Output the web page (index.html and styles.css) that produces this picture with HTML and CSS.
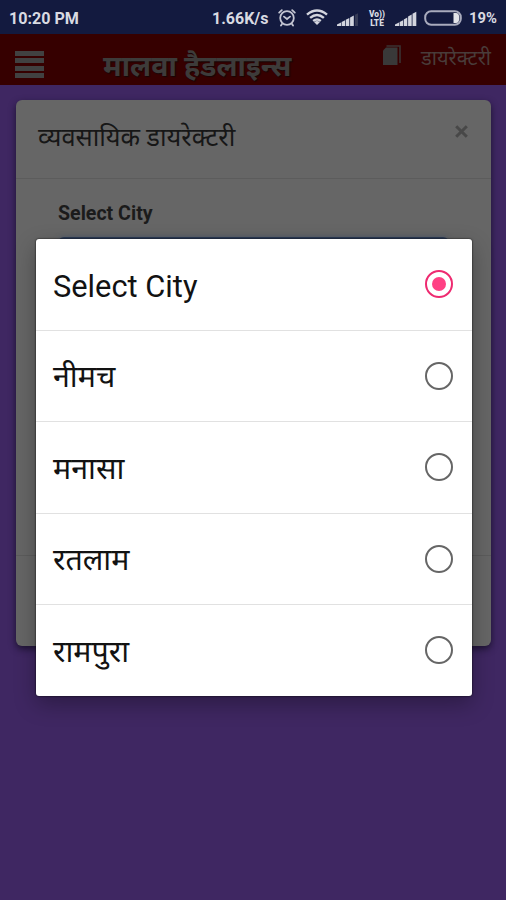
FILE: index.html
```html
<!DOCTYPE html>
<html lang="hi">
<head>
<meta charset="utf-8">
<title>मालवा हैडलाइन्स</title>
<link rel="stylesheet" href="styles.css">
</head>
<body>
<div class="status">
  <span class="clock">10:20 PM</span>
  <span class="speed">1.66K/s</span>
  <svg class="alarm" width="18" height="18" viewBox="0 0 18 18" fill="none" stroke="#c3c5d2" stroke-width="1.800" stroke-linecap="round"><circle cx="9" cy="9" r="6.8"/><path d="M6 7.6l3 2.4 3-2.4M1.2 3.6l2.6-2.4M16.8 3.6l-2.600-2.400M4 15l-1 1.600M14 15l1 1.600"/></svg>
  <svg class="wifi" width="22" height="16" viewBox="0 0 22 16" fill="none" stroke="#d3d5de" stroke-width="2.500"><path d="M1 5.600Q11-2.600 21 5.600M4.100 8.900Q11 3.200 17.900 8.900M7.200 12Q11 8.900 14.800 12"/><path d="M8.200 13.200Q11 11 13.800 13.200L11 16z" fill="#d3d5de" stroke="none"/></svg>
  <svg class="signal" width="22" height="15" viewBox="0 0 22 15" fill="#d3d5de"><path d="M0 15v-1.500l4-2V15zM4.600 15v-4l3.500-1.800V15zM8.800 15V8.800l3.500-1.800V15zM13.100 15V6.600l3.700-2V15z"/><path d="M18 15V3.800l3-1.500V15z" fill="#363b56"/></svg>
  <span class="volte"><span>Vo))</span><span>LTE</span></span>
  <svg class="signal second" width="22" height="15" viewBox="0 0 22 15" fill="#d3d5de"><path d="M0 15v-1.500l4-2V15zM4.600 15v-4l3.500-1.800V15zM8.800 15V8.400l3.500-1.800V15zM13.100 15V5.600l3.600-2V15zM17.500 15V2.800l3.800-2V15z"/></svg>
  <svg class="battery" width="38" height="16" viewBox="0 0 38 16"><rect x="1.200" y="1.200" width="35.600" height="13.600" rx="6" fill="none" stroke="#a9abbd" stroke-width="2"/><path d="M29.500 3H32q3.300 0 3.300 5T32 13h-2.500z" fill="#e3e4e9"/></svg>
  <span class="percent">19%</span>
</div>
<header class="appbar">
  <span class="menu"><i></i><i></i><i></i><i></i></span>
  <h1>मालवा हैडलाइन्स</h1>
  <svg class="book" width="20" height="21" viewBox="0 0 20 21"><path d="M4.500 1H18v17" fill="none" stroke="#3b3333" stroke-width="1.600"/><path d="M4 2.500h11.500V20H1V5.500z" fill="#393939"/></svg>
  <span class="directory">डायरेक्टरी</span>
</header>
<main class="page">
  <section class="card">
    <div class="card-head"><h2>व्यवसायिक डायरेक्टरी</h2>
      <svg class="close" width="13" height="13" viewBox="0 0 13 13" stroke="#484848" stroke-width="3"><path d="M1.200 1.200l10.600 10.600M11.800 1.200L1.200 11.800"/></svg>
    </div>
    <div class="card-body"><label>Select City</label><div class="field"></div></div>
    <div class="card-foot"></div>
  </section>
</main>
<div class="dialog">
  <div class="option"><span class="latin">Select City</span><i class="radio on"></i></div>
  <div class="option"><span>नीमच</span><i class="radio"></i></div>
  <div class="option"><span>मनासा</span><i class="radio"></i></div>
  <div class="option"><span>रतलाम</span><i class="radio"></i></div>
  <div class="option"><span>रामपुरा</span><i class="radio"></i></div>
</div>
</body>
</html>
```
FILE: styles.css
```css
* { box-sizing: border-box; }
body { margin: 0; width: 506px; height: 900px; overflow: hidden; position: relative; display: flex; flex-direction: column; background: #3f2762; font-family: Roboto, "Noto Sans", sans-serif; }
.status { height: 34px; flex: none; background: #131a3f; color: #d9dae2; display: flex; align-items: center; padding: 2px 8px 0 9px; font-size: 16.100px; font-weight: 700; white-space: nowrap; }
.clock { width: 203px; }
.speed { width: 67px; font-size: 16px; }
.alarm { margin: -1px 10px 0 -1px; }
.wifi { margin-right: 9px; margin-top: -2px; }
.signal { margin-top: 1px; }
.volte { width: 18px; margin: 1px 9px 0 9px; display: flex; flex-direction: column; align-items: center; font-size: 8.400px; line-height: 9px; font-weight: 900; }
.battery { margin: 0 7px 0 7px; }
.percent { font-size: 14.800px; }
.appbar { height: 51px; flex: none; background: #360000; display: flex; color: #444140; padding-left: 15px; }
.menu { width: 29px; margin-top: 17px; display: flex; flex-direction: column; gap: 2.400px; }
.menu i { height: 5px; background: #414141; }
h1 { margin: 15px 0 0 59px; width: 189px; font-size: 28.600px; line-height: 34px; font-weight: 700; white-space: nowrap; color: #3d3b3a; text-shadow: 1px 1px 1px #160606; }
.book { margin: 11px 0 0 90px; }
.directory { margin: 10px 0 0 19px; font-size: 20px; line-height: 28px; white-space: nowrap; color: #493c3a; }
.page { flex: 1; padding: 15px 15px 0 16px; }
.card { height: 546px; background: #666; border-radius: 6px; display: flex; flex-direction: column; box-shadow: 0 3px 7px #1c1230; }
.card-head { height: 79px; flex: none; border-bottom: 1px solid #5c5c5c; display: flex; justify-content: space-between; padding: 20px 23px 0 22px; }
h2 { margin: 0; font-size: 25.400px; line-height: 34px; font-weight: 400; color: #171717; white-space: nowrap; }
.close { margin-top: 5px; }
.card-body { flex: 1; padding: 23px 42px; }
label { display: block; font-size: 19.600px; line-height: 24px; font-weight: 700; color: #1b1b1b; }
.field { height: 50px; margin-top: 11px; border: 2px solid #2d3c58; border-radius: 6px; box-shadow: 0 0 5px #4f5b6c; }
.card-foot { height: 91px; border-top: 1px solid #5c5c5c; }
.dialog { position: absolute; left: 35.500px; top: 239px; width: 436px; height: 456.500px; background: #fff; border-radius: 3px; display: flex; flex-direction: column; box-shadow: 0 0 2px #000, 0 8px 22px rgba(0,0,0,.3); }
.option { flex: 1; display: flex; align-items: center; justify-content: space-between; padding: 0 18.500px 0 17.500px; border-bottom: 1.500px solid #e1e1e1; color: #121212; font-size: 30.400px; line-height: 40px; white-space: nowrap; }
.option span { margin-top: 3px; }
.option:last-child { border: 0; }
.option .latin { font-size: 30.800px; margin-top: 5px; }
.radio { width: 28px; height: 28px; border: 2.500px solid #666; border-radius: 50%; display: flex; align-items: center; justify-content: center; }
.radio.on { border-color: #ee2a70; border-width: 2px; }
.radio.on::after { content: ""; width: 14px; height: 14px; border-radius: 50%; background: #ff4084; }
```
